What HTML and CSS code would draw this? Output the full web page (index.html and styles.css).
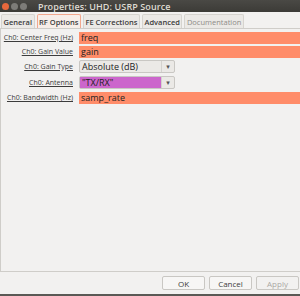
FILE: index.html
```html
<!DOCTYPE html>
<html lang="en">
<head>
  <meta charset="UTF-8">
  <title>Properties: UHD: USRP Source</title>
  <link rel="stylesheet" href="styles.css">
</head>
<body>
<div class="window">
  <div class="titlebar">
    <div class="buttons">
      <span class="dot close"></span>
      <span class="dot"></span>
      <span class="dot"></span>
    </div>
    <div class="title">Properties: UHD: USRP Source</div>
  </div>

  <div class="tabs">
    <div class="tab">General</div>
    <div class="tab active">RF Options</div>
    <div class="tab">FE Corrections</div>
    <div class="tab">Advanced</div>
    <div class="tab disabled">Documentation</div>
  </div>

  <div class="panel">
    <div class="row">
      <div class="label">Ch0: Center Freq (Hz)</div>
      <div class="field orange">freq</div>
    </div>
    <div class="row">
      <div class="label">Ch0: Gain Value</div>
      <div class="field orange">gain</div>
    </div>
    <div class="row tall">
      <div class="label">Ch0: Gain Type</div>
      <div class="combo">
        <div class="combo-text">Absolute (dB)</div>
        <div class="arrow">&#9662;</div>
      </div>
    </div>
    <div class="row tall">
      <div class="label">Ch0: Antenna</div>
      <div class="combo">
        <div class="combo-text purple">"TX/RX"</div>
        <div class="arrow">&#9662;</div>
      </div>
    </div>
    <div class="row">
      <div class="label">Ch0: Bandwidth (Hz)</div>
      <div class="field orange">samp_rate</div>
    </div>
  </div>

  <div class="actions">
    <button class="btn">OK</button>
    <button class="btn">Cancel</button>
    <button class="btn disabled">Apply</button>
  </div>
</div>
</body>
</html>
```
FILE: styles.css
```css
body{
  margin: 0;
  padding: 0;
  font-family: "Open Sans", "DejaVu Sans", sans-serif;
  background: #f2f1f0;
}

.window{
  width: 300px;
  height: 296px;
  display: flex;
  flex-direction: column;
  background: #f2f1f0;
  border-bottom: 2px solid #5a5955;
  box-sizing: border-box;
  overflow: hidden;
}

.titlebar{
  height: 12px;
  background: linear-gradient(#4a4945, #3c3b37);
  display: flex;
  align-items: center;
}

.buttons{
  display: flex;
  gap: 2px;
  padding-left: 2px;
}

.dot{
  width: 7px;
  height: 7px;
  border-radius: 50%;
  background: #7d7c78;
}

.dot.close{
  background: #e9683c;
}

.title{
  color: #dfdbd2;
  font-size: 9px;
  font-weight: 600;
  padding-left: 11px;
  letter-spacing: 0.1px;
}

.tabs{
  display: flex;
  gap: 2px;
  padding: 2px 0 0 1px;
  height: 17px;
  box-sizing: border-box;
  border-bottom: 1px solid #cfcdc9;
}

.tab{
  font-size: 7.5px;
  font-weight: 600;
  color: #3c3c3c;
  padding: 0 1.5px;
  line-height: 14px;
  border: 1px solid #d6d4cf;
  border-bottom: none;
  border-radius: 2px 2px 0 0;
  background: #ebe9e6;
}

.tab.active{
  background: #f7eee9;
  border-color: #f2a88e;
}

.tab.disabled{
  color: #8e8c88;
  font-weight: normal;
}

.panel{
  flex: 1;
  border-left: 1px solid #cfcdc9;
  border-bottom: 1px solid #cfcdc9;
  padding-top: 2px;
  display: flex;
  flex-direction: column;
  gap: 1px;
}

.row{
  display: flex;
  align-items: center;
  height: 13px;
}

.row.tall{
  height: 15px;
}

.label{
  width: 72px;
  text-align: right;
  padding-right: 6px;
  font-size: 7px;
  color: #3c3c3c;
  text-decoration: underline;
}

.field{
  flex: 1;
  height: 12px;
  line-height: 12px;
  font-size: 9px;
  color: #222;
  padding-left: 2px;
}

.orange{
  background: #ff8c69;
}

.combo{
  width: 96px;
  height: 13px;
  display: flex;
  border: 1px solid #c9c7c3;
  border-radius: 2px;
  background: #ebe9e6;
  box-sizing: border-box;
}

.combo-text{
  flex: 1;
  font-size: 9px;
  line-height: 11px;
  padding-left: 2px;
  color: #222;
}

.combo-text.purple{
  background: #cc66cc;
}

.arrow{
  width: 12px;
  border-left: 1px solid #d4d2ce;
  font-size: 7px;
  line-height: 11px;
  text-align: center;
  color: #555;
}

.actions{
  height: 22px;
  display: flex;
  justify-content: flex-end;
  align-items: center;
  gap: 4px;
  padding-right: 1px;
}

.btn{
  width: 43px;
  height: 14px;
  padding: 0;
  font-family: "Open Sans", "DejaVu Sans", sans-serif;
  font-size: 8px;
  color: #3c3c3c;
  background: #f7f6f5;
  border: 1px solid #c9c7c3;
  border-radius: 2px;
}

.btn.disabled{
  color: #aaa8a4;
  background: #f2f1f0;
}
```
